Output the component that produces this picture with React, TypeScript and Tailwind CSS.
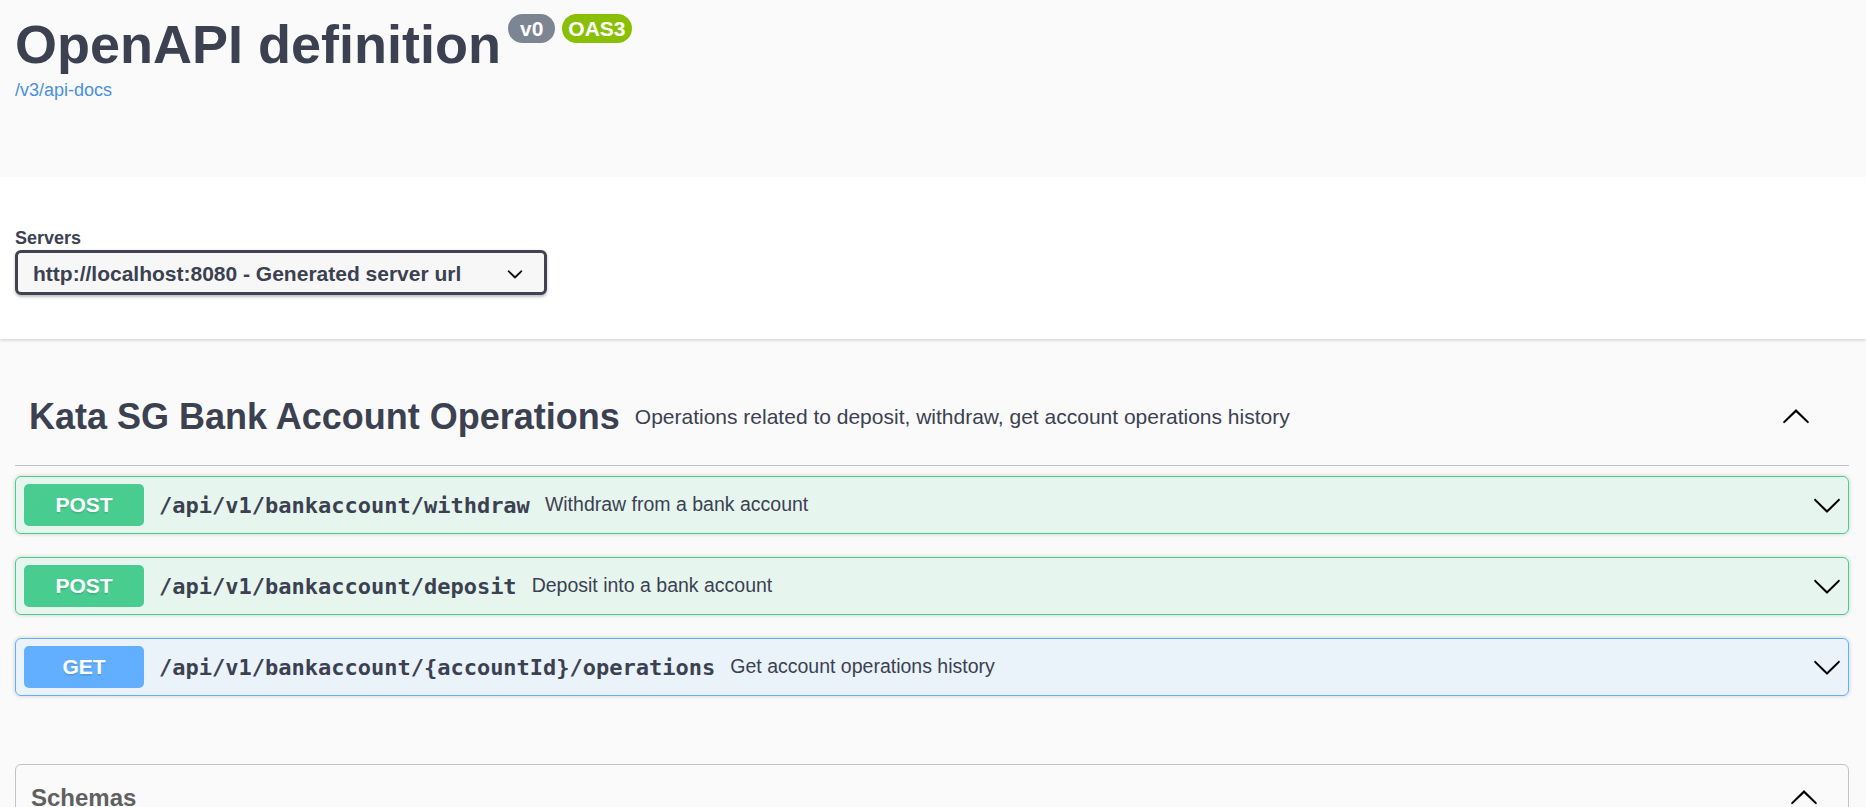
import React from 'react';

const sans = { fontFamily: '"Liberation Sans", Arial, sans-serif' };

const arrowPath =
  'M17.418 6.109c.272-.268.709-.268.979 0s.271.701 0 .969l-7.908 7.83c-.27.268-.707.268-.979 0l-7.908-7.83c-.27-.268-.27-.701 0-.969.271-.268.709-.268.979 0L10 13.25l7.418-7.141z';

function Chevron({ up = false, size = 30, bold = false }: { up?: boolean; size?: number; bold?: boolean }) {
  return (
    <svg viewBox="0 0 20 20" width={size} height={size} style={up ? { transform: 'rotate(180deg)' } : undefined}>
      <path fill="#000" d={arrowPath} stroke={bold ? '#000' : 'none'} strokeWidth={bold ? 1.1 : 0} />
    </svg>
  );
}

type Op = { method: 'POST' | 'GET'; path: string; summary: string };

const ops: Op[] = [
  { method: 'POST', path: '/api/v1/bankaccount/withdraw', summary: 'Withdraw from a bank account' },
  { method: 'POST', path: '/api/v1/bankaccount/deposit', summary: 'Deposit into a bank account' },
  { method: 'GET', path: '/api/v1/bankaccount/{accountId}/operations', summary: 'Get account operations history' },
];

function OpBlock({ op }: { op: Op }) {
  const post = op.method === 'POST';
  return (
    <div
      className={
        'flex h-[58px] items-center rounded-[6px] border pl-[8px] pr-[6px] shadow-[0_0_4.5px_rgba(0,0,0,0.19)] ' +
        (post ? 'border-[#49cc90] bg-[rgba(73,204,144,0.1)]' : 'border-[#61affe] bg-[rgba(97,175,254,0.1)]')
      }
    >
      <div
        className={
          'flex h-[42px] w-[120px] shrink-0 items-center justify-center rounded-[5px] text-[21px] font-bold text-white [text-shadow:0_1.5px_0_rgba(0,0,0,0.1)] ' +
          (post ? 'bg-[#49cc90]' : 'bg-[#61affe]')
        }
      >
        {op.method}
      </div>
      <span
        className="px-[15px] text-[22px] font-bold text-[#3b4151]"
        style={{ fontFamily: '"DejaVu Sans Mono", monospace' }}
      >
        {op.path}
      </span>
      <span className="flex-1 text-[19.5px] text-[#3b4151]">{op.summary}</span>
      <Chevron />
    </div>
  );
}

export default function App() {
  return (
    <div className="min-h-screen bg-[#fafafa] text-[#3b4151]" style={sans}>
      {/* info */}
      <div className="flex h-[177px] flex-col pl-[15px] pt-[13px]">
        <div className="flex items-start">
          <h2 className="text-[54px] font-bold leading-[62px] text-[#3b4151]">OpenAPI definition</h2>
          <span className="ml-[7px] mt-[1px] flex h-[29px] items-center rounded-full bg-[#7d8492] px-[12px] text-[21px] font-bold leading-[29px] text-white">
            v0
          </span>
          <span className="ml-[7px] mt-[1px] flex h-[29px] items-center rounded-full bg-[#89bf04] px-[6px] text-[21px] font-bold leading-[29px] text-white">
            OAS3
          </span>
        </div>
        <a className="mt-[5px] text-[18px] leading-[21px] text-[#4990e2]">/v3/api-docs</a>
      </div>

      {/* servers */}
      <div className="bg-white pb-[44px] pl-[15px] pt-[51px] shadow-[0_1.5px_3px_0_rgba(0,0,0,0.15)]">
        <div className="text-[18px] font-bold leading-[21px] text-[#3b4151]">Servers</div>
        <div className="mt-[1px] flex h-[45px] w-[532px] items-center justify-between rounded-[6px] border-[3px] border-[#41444e] bg-[#f7f7f7] pl-[15px] pr-[21px] pt-[2px] shadow-[0_1.5px_3px_0_rgba(0,0,0,0.25)]">
          <span className="text-[21px] font-bold text-[#3b4151]">http://localhost:8080 - Generated server url</span>
          <Chevron size={16} bold />
        </div>
      </div>

      {/* operations */}
      <div className="pl-[15px] pr-[17px] pt-[30px]">
        <div className="flex h-[97px] items-center border-b border-[rgba(59,65,81,0.3)] pl-[14px] pr-[38px]">
          <h3 className="text-[36px] font-bold text-[#3b4151]">Kata SG Bank Account Operations</h3>
          <span className="flex-1 px-[15px] text-[21px] text-[#3b4151]">
            Operations related to deposit, withdraw, get account operations history
          </span>
          <Chevron up />
        </div>
        <div className="mt-[10px] flex flex-col gap-[23px]">
          {ops.map((op) => (
            <OpBlock key={op.path} op={op} />
          ))}
        </div>

        {/* schemas */}
        <div className="mb-[30px] mt-[68px] rounded-[6px] border border-[rgba(59,65,81,0.3)]">
          <div className="flex items-center py-[15px] pl-[15px] pr-[29px]">
            <h4 className="flex-1 text-[24px] font-bold text-[#606060]">Schemas</h4>
            <Chevron up />
          </div>
          <div className="h-[120px]" />
        </div>
      </div>
    </div>
  );
}
